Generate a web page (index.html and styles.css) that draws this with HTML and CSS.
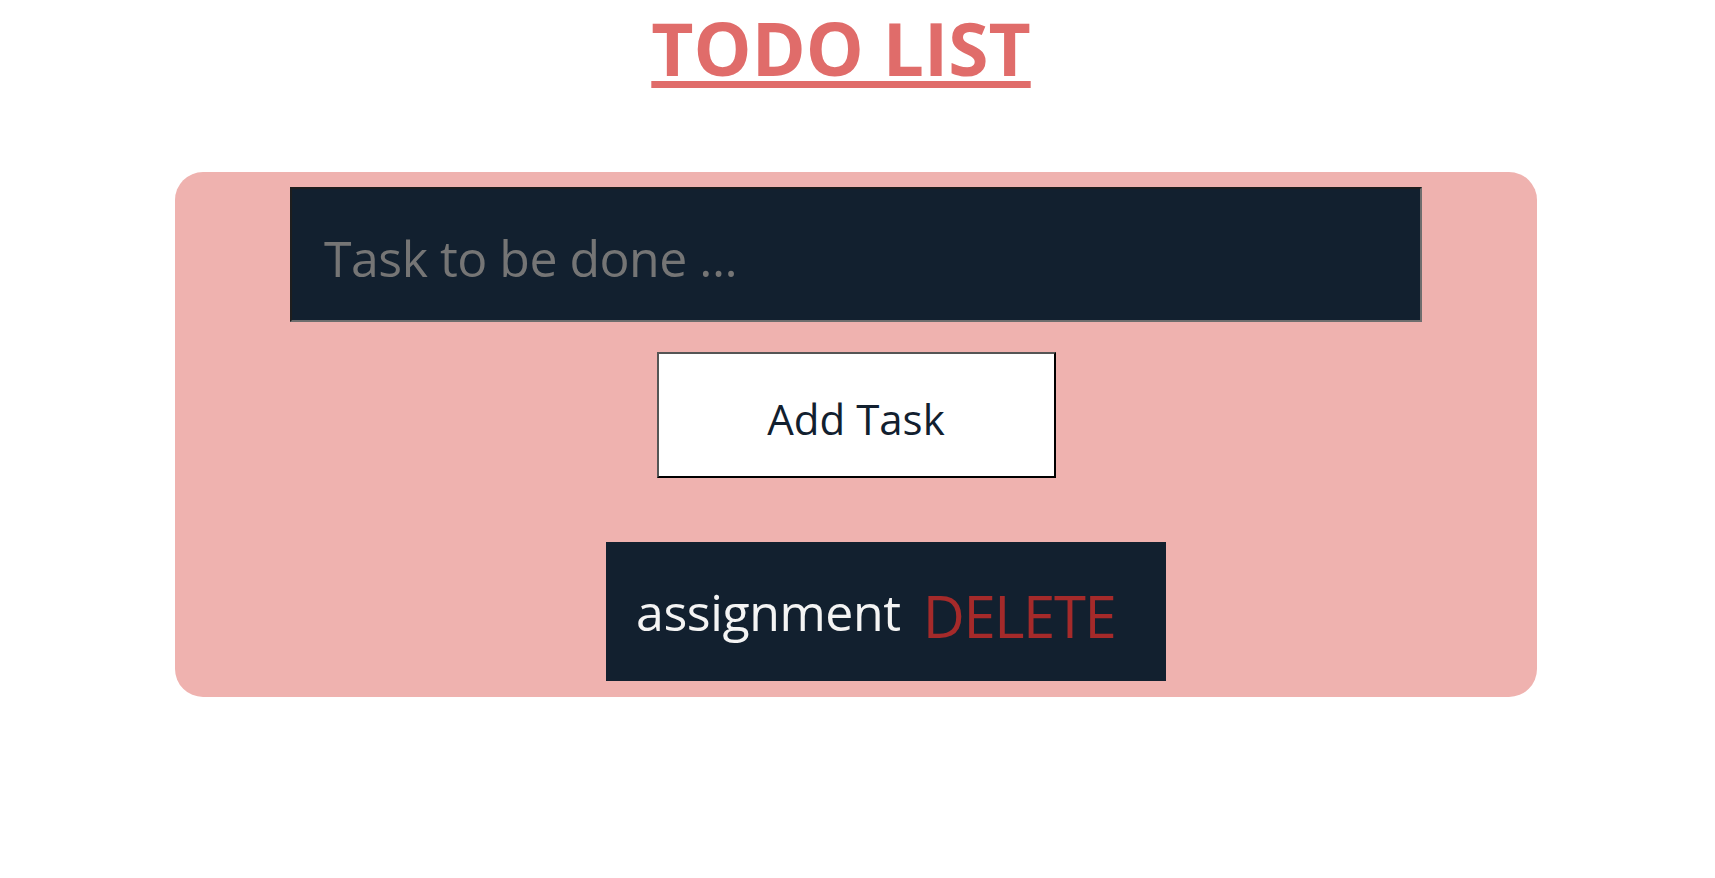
FILE: index.html
```html
<!DOCTYPE html>
<html lang="en">
<head>
<meta charset="utf-8">
<title>Todo List</title>
<link rel="stylesheet" href="styles.css">
</head>
<body>
<main class="app">
  <h1 class="title">TODO LIST</h1>
  <section class="card">
    <input class="task-input" type="text" placeholder="Task to be done ...">
    <button class="add-btn" type="button">Add Task</button>
    <ul class="task-list">
      <li class="task-item">
        <span class="task-name">assignment</span>
        <span class="task-delete">DELETE</span>
      </li>
    </ul>
  </section>
</main>
</body>
</html>
```

FILE: styles.css
```css
html, body {
  margin: 0;
  padding: 0;
  background: #ffffff;
}

body {
  font-family: "Open Sans", "Noto Sans", sans-serif;
}

.app {
  display: flex;
  flex-direction: column;
  align-items: center;
}

.title {
  margin: 0 33px 0 0;
  padding: 4px 4px 4px;
  font-size: 73px;
  line-height: 1.2;
  font-weight: 700;
  color: #e06c6a;
  text-decoration: underline;
  text-decoration-thickness: 7px;
  text-underline-offset: 5px;
}

.card {
  box-sizing: border-box;
  width: 1362px;
  margin: 76px 3px 0 0;
  padding: 15px 0 16px;
  background: #efb2af;
  border-radius: 28px;
  display: flex;
  flex-direction: column;
  align-items: center;
}

.task-input {
  box-sizing: border-box;
  width: 1132px;
  height: 135px;
  margin: 0;
  padding: 8px 0 0 32px;
  background: #12202f;
  color: #ffffff;
  font-family: inherit;
  font-size: 50px;
  letter-spacing: -0.5px;
  border-width: 2px;
  border-style: solid;
  border-color: #1e1e1e #6e6e6e #6e6e6e #1e1e1e;
  outline: none;
}

.task-input::placeholder {
  color: #757575;
}

.add-btn {
  box-sizing: border-box;
  width: 399px;
  height: 126px;
  margin-top: 30px;
  padding: 8px 0 0;
  background: #ffffff;
  color: #12202f;
  font-family: inherit;
  font-size: 42px;
  border-width: 2px;
  border-style: solid;
  border-color: #555555 #000000 #000000 #555555;
  cursor: pointer;
}

.task-list {
  list-style: none;
  margin: 64px 0 0;
  padding: 0;
  display: flex;
  flex-direction: column;
  align-items: center;
}

.task-item {
  box-sizing: border-box;
  width: 560px;
  height: 139px;
  margin-left: 60px;
  padding: 2px 0 0 30px;
  background: #12202f;
  display: flex;
  align-items: center;
  gap: 22px;
}

.task-name {
  font-size: 50px;
  letter-spacing: -0.4px;
  color: #f4f4f4;
}

.task-delete {
  padding-top: 6px;
  font-size: 58px;
  letter-spacing: -1.4px;
  color: #a52a2a;
  cursor: pointer;
}
```
